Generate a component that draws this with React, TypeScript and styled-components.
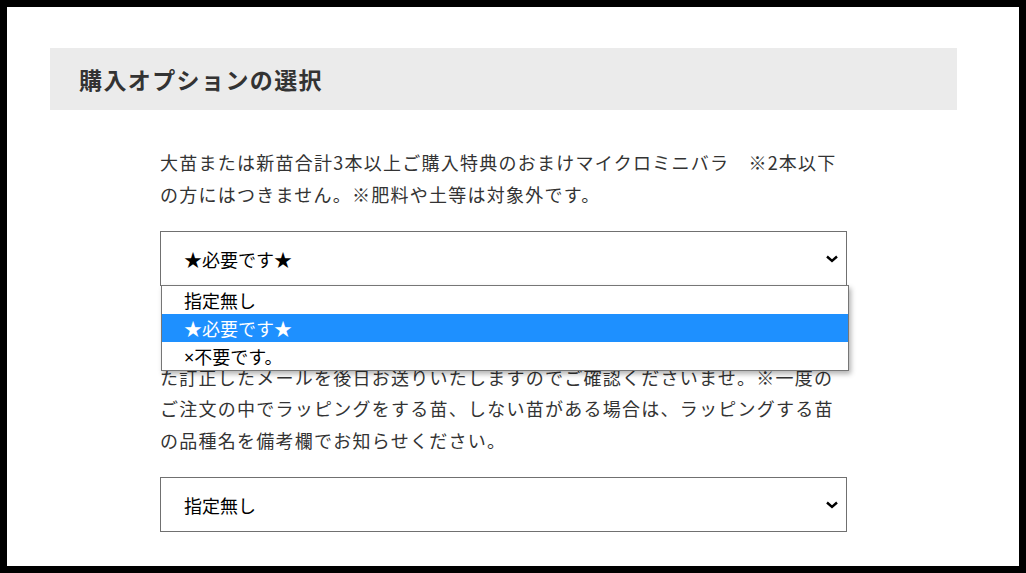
import React from "react";
import styled, { createGlobalStyle } from "styled-components";

const GlobalStyle = createGlobalStyle`
  html, body {
    margin: 0;
    padding: 0;
    background: #000;
  }
  body {
    font-family: "Noto Sans CJK JP", "Noto Sans", sans-serif;
  }
`;

const Page = styled.div`
  margin: 7px;
  width: 1012px;
  height: 559px;
  background: #fff;
  overflow: hidden;
  padding-top: 41px;
  box-sizing: border-box;
`;

const SectionHeader = styled.h2`
  margin: 0 0 0 43px;
  width: 907px;
  height: 62px;
  background: #ebebeb;
  display: flex;
  align-items: center;
  padding-left: 29px;
  box-sizing: border-box;
  font-size: 23px;
  font-weight: 700;
  letter-spacing: 1.4px;
  color: #333;
`;

const Body = styled.div`
  margin: 37px 0 0 153px;
  width: 687px;
  display: flex;
  flex-direction: column;
`;

const Note = styled.p<{ $gap: number }>`
  margin: ${(p) => p.$gap}px 0 21px;
  font-size: 18px;
  line-height: 31.5px;
  letter-spacing: 1.25px;
  color: #333;
`;

const SelectWrap = styled.div`
  position: relative;
`;

const SelectBox = styled.div`
  height: 55px;
  border: 1px solid #707070;
  box-sizing: border-box;
  display: flex;
  align-items: center;
  justify-content: space-between;
  padding: 0 7px 0 23px;
  font-family: "Noto Sans", "Noto Sans CJK JP", sans-serif;
  font-size: 18px;
  color: #000;
  background: #fff;
`;

const Chevron = () => (
  <svg width="14" height="10" viewBox="0 0 14 10">
    <path d="M2 2.5 L7 7 L12 2.5" fill="none" stroke="#000" strokeWidth="2.4" />
  </svg>
);

const OptionList = styled.ul`
  position: absolute;
  top: 54px;
  left: 1px;
  width: 688px;
  margin: 0;
  padding: 0;
  list-style: none;
  background: #fff;
  border: 1px solid #767676;
  box-sizing: border-box;
  box-shadow: 2px 3px 5px rgba(0, 0, 0, 0.3);
  z-index: 2;
`;

const OptionItem = styled.li<{ $active?: boolean }>`
  height: 28px;
  display: flex;
  align-items: center;
  padding-left: 22px;
  font-family: "Noto Sans", "Noto Sans CJK JP", sans-serif;
  font-size: 18px;
  color: ${(p) => (p.$active ? "#fff" : "#000")};
  background: ${(p) => (p.$active ? "#1e90ff" : "transparent")};
`;

const options = ["指定無し", "★必要です★", "×不要です。"];

const note1 =
  "大苗または新苗合計3本以上ご購入特典のおまけマイクロミニバラ　※2本以下の方にはつきません。※肥料や土等は対象外です。";

const note2 =
  "ラッピングをご希望の方は選択してください。ご注文確認後に送料等を加算した訂正したメールを後日お送りいたしますのでご確認くださいませ。※一度のご注文の中でラッピングをする苗、しない苗がある場合は、ラッピングする苗の品種名を備考欄でお知らせください。";

export default function App() {
  return (
    <>
      <GlobalStyle />
      <Page>
        <SectionHeader>購入オプションの選択</SectionHeader>
        <Body>
          <Note $gap={0}>{note1}</Note>
          <SelectWrap>
            <SelectBox>
              ★必要です★
              <Chevron />
            </SelectBox>
            <OptionList>
              {options.map((o) => (
                <OptionItem key={o} $active={o === "★必要です★"}>
                  {o}
                </OptionItem>
              ))}
            </OptionList>
          </SelectWrap>
          <Note $gap={44}>{note2}</Note>
          <SelectWrap>
            <SelectBox>
              指定無し
              <Chevron />
            </SelectBox>
          </SelectWrap>
        </Body>
      </Page>
    </>
  );
}
